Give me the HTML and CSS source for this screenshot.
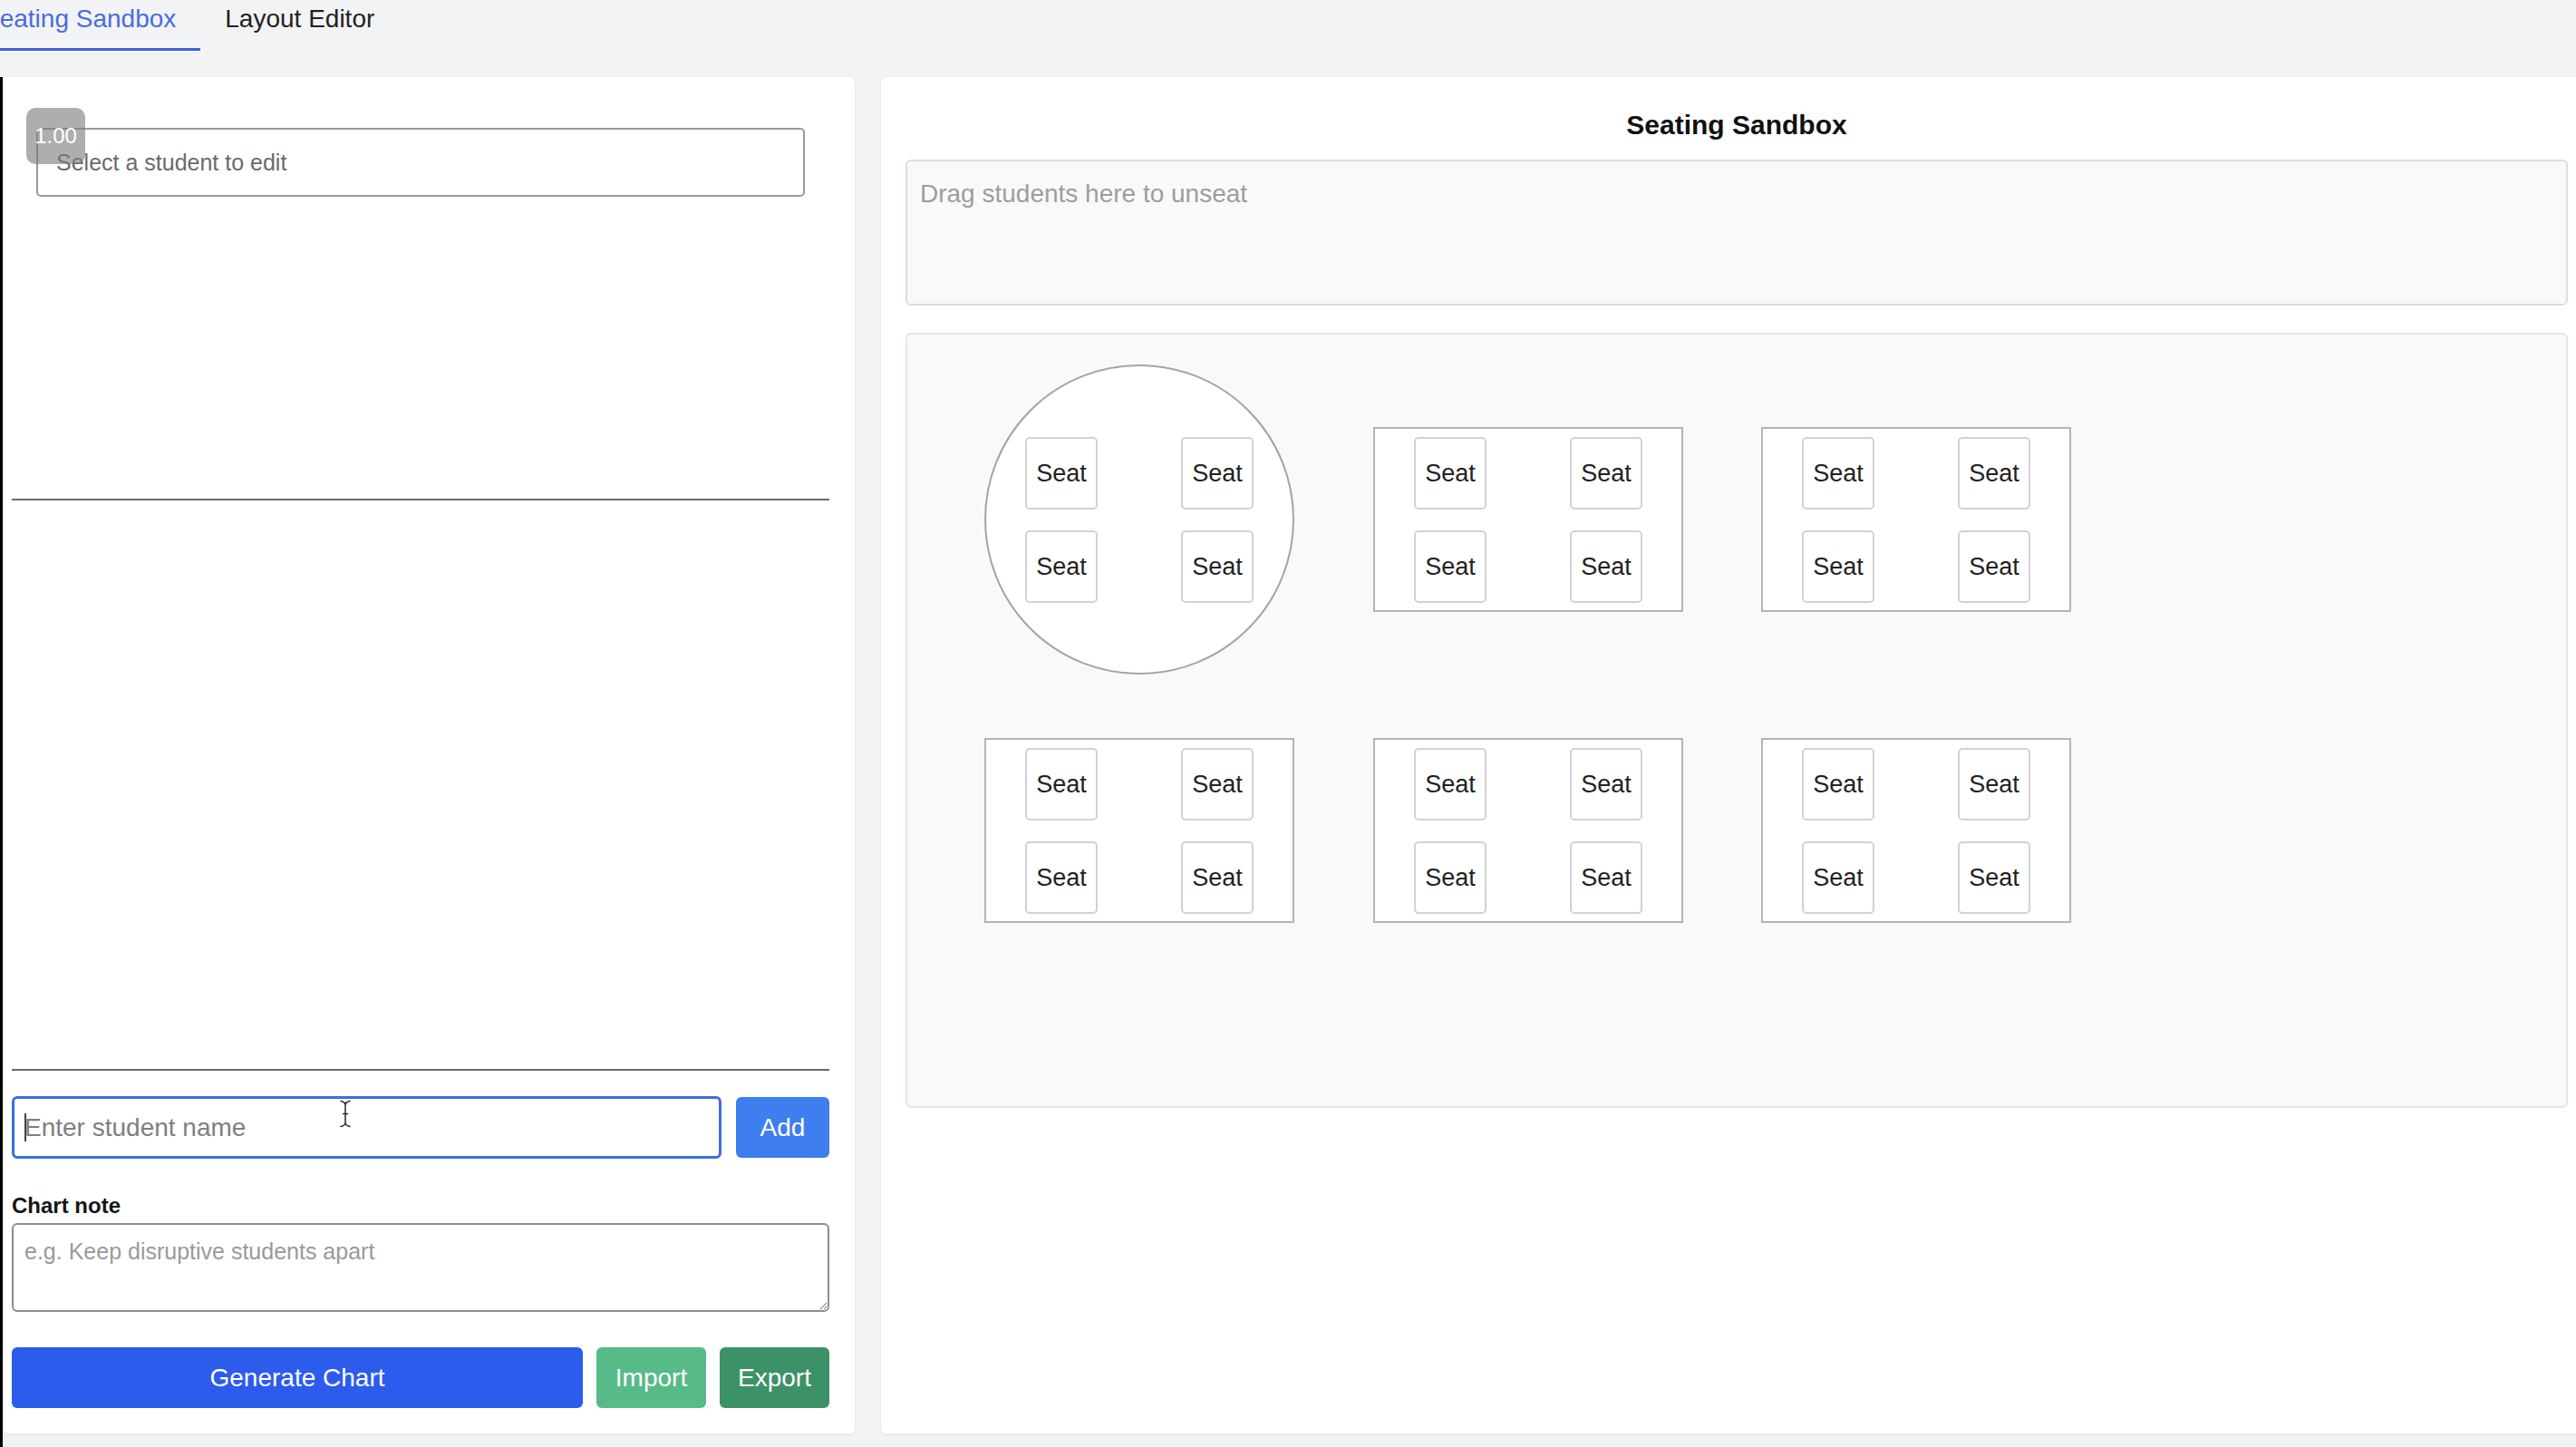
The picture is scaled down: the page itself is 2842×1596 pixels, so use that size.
FILE: index.html
```html
<!DOCTYPE html>
<html lang="en">
<head>
<meta charset="utf-8">
<title>Seating Sandbox</title>
<link rel="stylesheet" href="styles.css">
</head>
<body>
<nav class="tabs">
  <button class="tab tab-active">Seating Sandbox</button>
  <button class="tab">Layout Editor</button>
</nav>
<main class="main">
  <aside class="left">
    <section class="editor">
      <div class="select-wrap">
        <select class="student-select"><option>Select a student to edit</option></select>
        <span class="zoom-badge">1.00</span>
      </div>
    </section>
    <hr class="divider">
    <section class="student-list"></section>
    <hr class="divider">
    <div class="add-row">
      <div class="field">
        <input class="name-input" type="text" placeholder="Enter student name">
        <span class="caret"></span>
        <svg class="ibeam" width="14" height="31" viewBox="0 0 14 31">
          <path d="M2 1.5 Q7 2.5 7 6 Q7 2.5 12 1.5 M7 6 V25 M2 29.5 Q7 28.5 7 25 Q7 28.5 12 29.5 M4.5 15.5 H9.5" fill="none" stroke="#fff" stroke-width="3.4" stroke-linecap="round"/>
          <path d="M2 1.5 Q7 2.5 7 6 Q7 2.5 12 1.5 M7 6 V25 M2 29.5 Q7 28.5 7 25 Q7 28.5 12 29.5 M4.5 15.5 H9.5" fill="none" stroke="#2a2a2a" stroke-width="1.5" stroke-linecap="round"/>
        </svg>
      </div>
      <button class="btn btn-add">Add</button>
    </div>
    <label class="note-label">Chart note</label>
    <textarea class="note" placeholder="e.g. Keep disruptive students apart"></textarea>
    <div class="actions">
      <button class="btn btn-generate">Generate Chart</button>
      <button class="btn btn-import">Import</button>
      <button class="btn btn-export">Export</button>
    </div>
  </aside>
  <section class="right">
    <h1 class="title">Seating Sandbox</h1>
    <div class="unseat">Drag students here to unseat</div>
    <div class="canvas">
      <div class="table round t1">
        <div class="seat">Seat</div><div class="seat">Seat</div><div class="seat">Seat</div><div class="seat">Seat</div>
      </div>
      <div class="table rect t2">
        <div class="seat">Seat</div><div class="seat">Seat</div><div class="seat">Seat</div><div class="seat">Seat</div>
      </div>
      <div class="table rect t3">
        <div class="seat">Seat</div><div class="seat">Seat</div><div class="seat">Seat</div><div class="seat">Seat</div>
      </div>
      <div class="table rect t4">
        <div class="seat">Seat</div><div class="seat">Seat</div><div class="seat">Seat</div><div class="seat">Seat</div>
      </div>
      <div class="table rect t5">
        <div class="seat">Seat</div><div class="seat">Seat</div><div class="seat">Seat</div><div class="seat">Seat</div>
      </div>
      <div class="table rect t6">
        <div class="seat">Seat</div><div class="seat">Seat</div><div class="seat">Seat</div><div class="seat">Seat</div>
      </div>
    </div>
  </section>
</main>
</body>
</html>
```

FILE: styles.css
```css
* { box-sizing: border-box; }

html, body {
  margin: 0;
  padding: 0;
  width: 2842px;
  height: 1596px;
  overflow: hidden;
  background: #f1f2f4;
  font-family: "Liberation Sans", Arial, sans-serif;
  color: #1f1f1f;
}

/* Tabs */
.tabs {
  display: flex;
  height: 85px;
  margin-left: -46px;
  background: #f2f3f5;
}

.tab {
  font-family: inherit;
  font-size: 28px;
  line-height: 32px;
  padding: 5px 27px 16px;
  height: 56px;
  border: 0;
  border-bottom: 3px solid transparent;
  background: transparent;
  color: #222;
  cursor: pointer;
}

.tab-active {
  color: #4b6be0;
  border-bottom-color: #3d62e0;
}

/* Main */
.main {
  display: flex;
  gap: 29px;
  height: 1511px;
  padding-bottom: 15px;
  border-left: 3px solid #000;
}

.left {
  flex: 0 0 940px;
  display: flex;
  flex-direction: column;
  background: #fff;
  border-radius: 6px;
  box-shadow: 0 1px 4px rgba(0, 0, 0, 0.06);
  padding: 0 28px 28px 10px;
}

.editor {
  height: 465px;
  padding: 56px 27px 0;
  flex: none;
}

.select-wrap {
  position: relative;
}

.student-select {
  display: block;
  width: 100%;
  height: 76px;
  appearance: none;
  -webkit-appearance: none;
  background: #fff;
  border: 2px solid #9a9a9a;
  border-radius: 5px;
  padding: 0 20px;
  font-family: inherit;
  font-size: 25px;
  color: #6a6a6a;
}

.zoom-badge {
  position: absolute;
  left: -11px;
  top: -22px;
  width: 65px;
  height: 62px;
  border-radius: 10px;
  background: rgba(125, 125, 125, 0.62);
  color: #fff;
  font-size: 24px;
  line-height: 62px;
  text-align: center;
}

.divider {
  flex: none;
  margin: 0;
  height: 0;
  border: 0;
  border-top: 2px solid #6a6a6a;
}

.student-list {
  flex: none;
  height: 627px;
}

.add-row {
  flex: none;
  display: flex;
  align-items: center;
  gap: 16px;
  margin-top: 28px;
  height: 69px;
}

.field {
  position: relative;
  flex: 1;
  height: 69px;
}

.name-input {
  width: 100%;
  height: 69px;
  border: 3px solid #3d6fd9;
  border-radius: 6px;
  padding: 0 11px;
  font-family: inherit;
  font-size: 28px;
  color: #222;
  outline: none;
}

.name-input::placeholder { color: #7f7f7f; }

.caret {
  position: absolute;
  left: 14px;
  top: 19px;
  width: 2px;
  height: 31px;
  background: #444;
}

.ibeam {
  position: absolute;
  left: 361px;
  top: 4px;
}

.btn {
  border: 0;
  border-radius: 6px;
  color: #fff;
  font-family: inherit;
  font-size: 28px;
  cursor: pointer;
}

.btn-add {
  flex: 0 0 103px;
  height: 67px;
  background: #3e7eee;
}

.note-label {
  flex: none;
  display: block;
  margin-top: 38px;
  font-size: 24px;
  line-height: 28px;
  font-weight: bold;
  color: #151515;
}

.note {
  flex: none;
  display: block;
  margin-top: 5px;
  width: 100%;
  height: 98px;
  border: 2px solid #8e8e8e;
  border-radius: 6px;
  padding: 14px 12px;
  font-family: inherit;
  font-size: 25px;
  line-height: 30px;
}

.note::placeholder { color: #9a9a9a; }

.actions {
  flex: none;
  display: flex;
  gap: 15px;
  margin-top: 39px;
  height: 67px;
}

.btn-generate {
  flex: 1;
  background: #2d5cec;
}

.btn-import {
  flex: 0 0 121px;
  background: #57bb88;
}

.btn-export {
  flex: 0 0 121px;
  background: #3d9166;
}

/* Right */
.right {
  flex: 0 0 1888px;
  background: #fff;
  border-radius: 6px;
  box-shadow: 0 1px 4px rgba(0, 0, 0, 0.06);
  padding: 34px 27px 0;
}

.title {
  margin: 0;
  text-align: center;
  font-size: 30px;
  line-height: 38px;
  font-weight: bold;
  color: #111;
}

.unseat {
  margin-top: 19px;
  height: 161px;
  border: 2px solid #dcdde0;
  border-radius: 6px;
  background: #f8f9fa;
  padding: 19px 14px 0;
  font-size: 28px;
  line-height: 34px;
  color: #9d9d9d;
}

.canvas {
  position: relative;
  margin-top: 30px;
  height: 855px;
  border: 2px solid #e4e6e9;
  border-radius: 6px;
  background: #f8f9fa;
}

.table {
  position: absolute;
  display: grid;
  grid-template-columns: 80px 80px;
  grid-template-rows: 80px 80px;
  column-gap: 92px;
  row-gap: 23px;
  justify-content: center;
  align-content: center;
  background: #fff;
}

.round {
  width: 342px;
  height: 342px;
  border: 2px solid #a4a4a4;
  border-radius: 50%;
}

.rect {
  width: 342px;
  height: 204px;
  border: 2px solid #b4b4b4;
}

.t1 { left: 85px; top: 33px; }
.t2 { left: 514px; top: 102px; }
.t3 { left: 942px; top: 102px; }
.t4 { left: 85px; top: 445px; }
.t5 { left: 514px; top: 445px; }
.t6 { left: 942px; top: 445px; }

.seat {
  display: flex;
  align-items: center;
  justify-content: center;
  padding-top: 2px;
  border: 2px solid #d2d2d2;
  border-radius: 5px;
  background: #fff;
  font-size: 27px;
  color: #222;
}
```
